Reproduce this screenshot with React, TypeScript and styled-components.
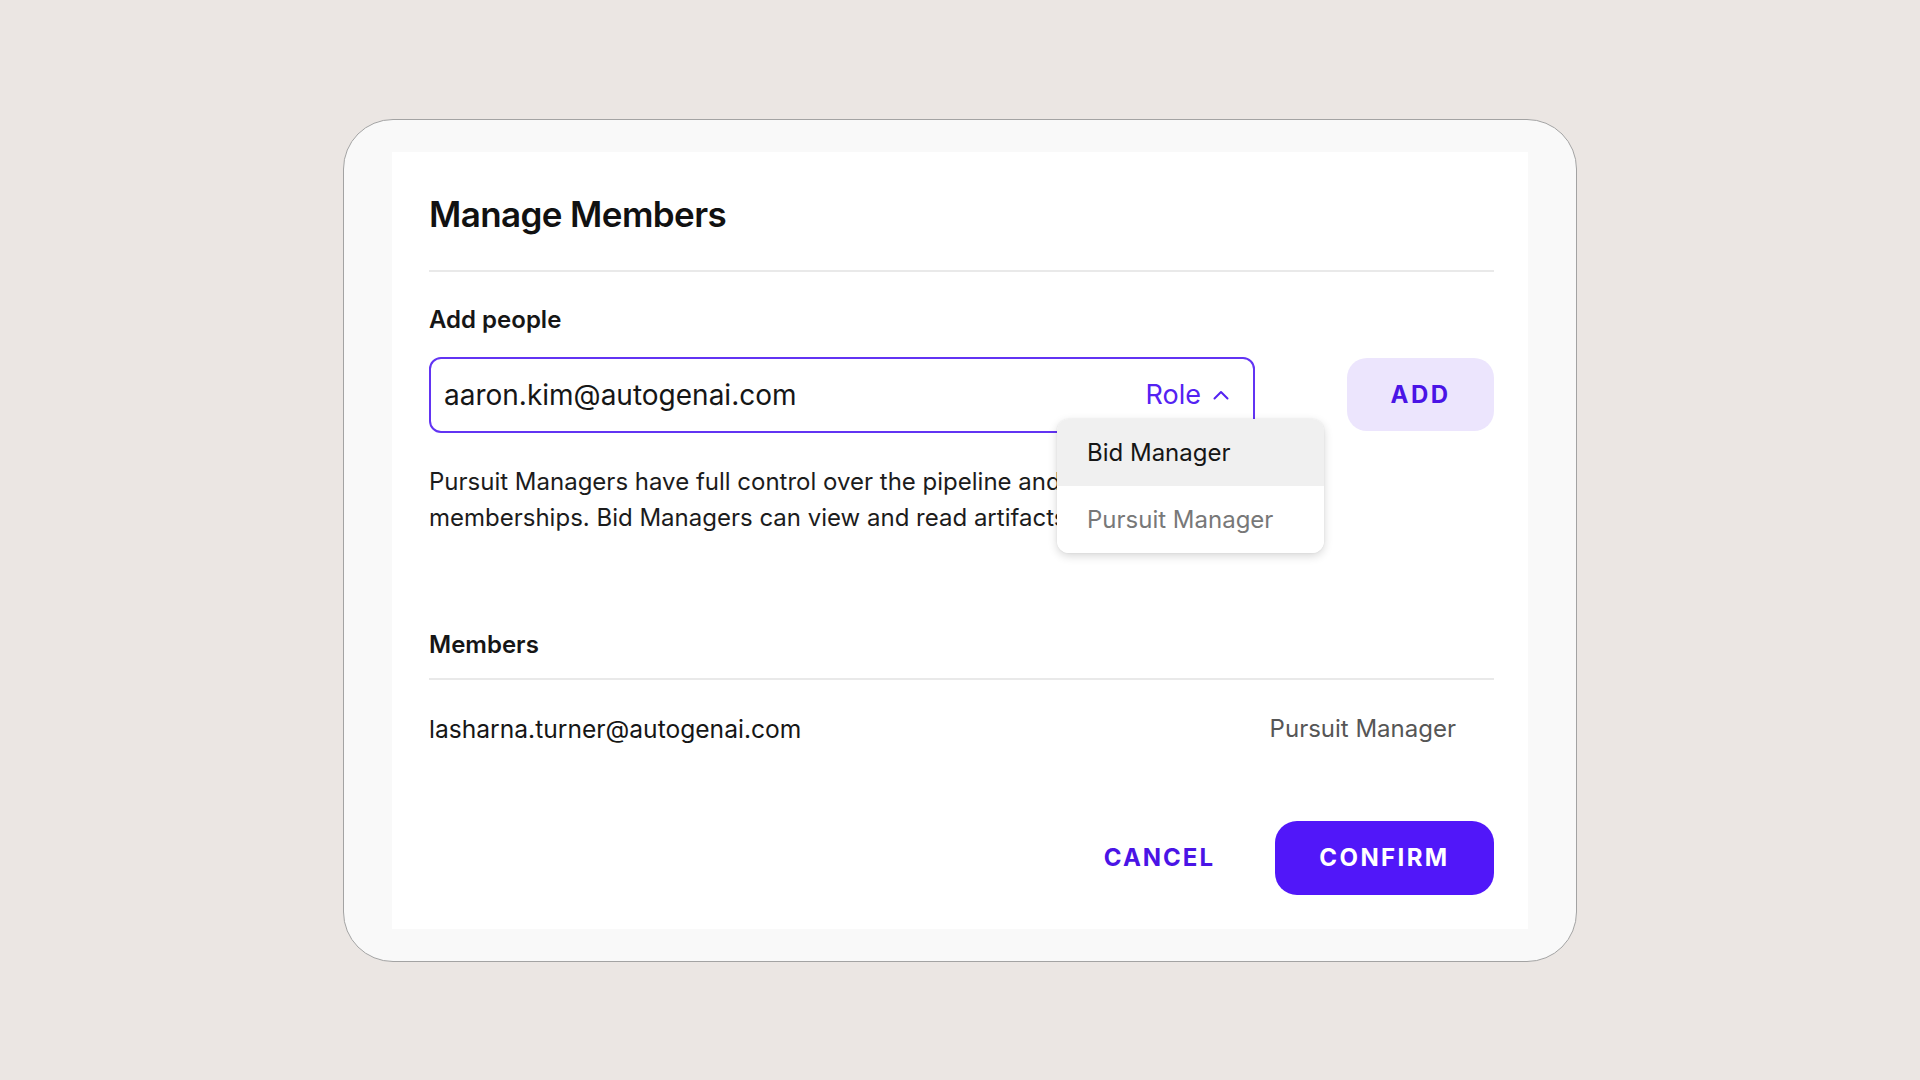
import React from 'react'
import styled, { createGlobalStyle } from 'styled-components'

const GlobalStyle = createGlobalStyle`
  html, body {
    margin: 0;
    padding: 0;
    background: #ebe6e3;
    font-family: Inter, "Liberation Sans", sans-serif;
    color: #161616;
  }
  * { box-sizing: border-box; }
`

const Page = styled.div`
  min-height: 100vh;
  display: flex;
  align-items: center;
  justify-content: center;
`

const Frame = styled.div`
  width: 1234px;
  background: #f9f9f9;
  border: 1px solid #a3a3a3;
  border-radius: 50px;
  padding: 32px 48px;
`

const Dialog = styled.section`
  background: #ffffff;
  padding: 40px 34px 34px 37px;
  display: flex;
  flex-direction: column;
`

const Title = styled.h1`
  margin: 0;
  font-size: 35px;
  line-height: 44px;
  font-weight: 600;
  letter-spacing: -0.6px;
  color: #111111;
`

const Divider = styled.hr<{ $top: number }>`
  margin: ${(p) => p.$top}px 0 0;
  border: none;
  height: 2px;
  background: #e9e9e9;
`

const SectionLabel = styled.h2<{ $top: number }>`
  margin: ${(p) => p.$top}px 0 0;
  font-size: 24px;
  line-height: 32px;
  font-weight: 600;
  color: #161616;
`

const AddRow = styled.div`
  margin-top: 21px;
  display: flex;
  justify-content: space-between;
  align-items: center;
`

const InputWrap = styled.div`
  position: relative;
  width: 826px;
`

const EmailField = styled.div`
  height: 76px;
  border: 2px solid #6234f3;
  border-radius: 12px;
  display: flex;
  align-items: center;
  justify-content: space-between;
  padding: 0 24px 0 13px;
`

const EmailText = styled.span`
  font-size: 28px;
  color: #161616;
`

const RoleToggle = styled.button`
  display: flex;
  align-items: center;
  gap: 12px;
  background: none;
  border: none;
  padding: 0;
  font-family: inherit;
  font-size: 27px;
  color: #5422f2;
  cursor: pointer;
`

const Menu = styled.ul`
  position: absolute;
  left: 628px;
  top: 62px;
  width: 267px;
  margin: 0;
  padding: 0;
  list-style: none;
  background: #ffffff;
  border-radius: 12px;
  overflow: hidden;
  box-shadow: 0 3px 10px rgba(0, 0, 0, 0.16), 0 0 2px rgba(0, 0, 0, 0.08);
  z-index: 2;
`

const MenuItem = styled.li<{ $active?: boolean }>`
  height: 67px;
  display: flex;
  align-items: center;
  padding-left: 30px;
  font-size: 24px;
  background: ${(p) => (p.$active ? '#f0f0f0' : '#ffffff')};
  color: ${(p) => (p.$active ? '#161616' : '#787878')};
`

const PillButton = styled.button<{ $variant: 'soft' | 'solid' | 'text' }>`
  height: ${(p) => (p.$variant === 'soft' ? '73px' : '74px')};
  padding: 0 ${(p) => (p.$variant === 'text' ? '24px' : '0')};
  width: ${(p) => (p.$variant === 'soft' ? '147px' : p.$variant === 'solid' ? '219px' : 'auto')};
  border: none;
  border-radius: ${(p) => (p.$variant === 'soft' ? '20px' : '22px')};
  font-family: inherit;
  font-size: 24px;
  font-weight: 700;
  letter-spacing: ${(p) => (p.$variant === 'text' ? '2px' : '2.4px')};
  cursor: pointer;
  background: ${(p) =>
    p.$variant === 'soft' ? '#ece5fd' : p.$variant === 'solid' ? '#5117f9' : 'transparent'};
  color: ${(p) => (p.$variant === 'solid' ? '#ffffff' : '#4a14e6')};
`

const Description = styled.p`
  margin: 31px 0 0;
  font-size: 24px;
  line-height: 36px;
  color: #1c1c1c;
`

const MemberRow = styled.div`
  margin-top: 31px;
  display: flex;
  justify-content: space-between;
  align-items: center;
  padding-right: 38px;
  font-size: 24px;
  line-height: 36px;
`

const MemberEmail = styled.span`
  font-size: 24.6px;
  color: #161616;
`

const MemberRole = styled.span`
  color: #565656;
`

const Footer = styled.div`
  margin-top: 74px;
  display: flex;
  justify-content: flex-end;
  align-items: center;
  gap: 36px;
`

function Chevron() {
  return (
    <svg width="16" height="10" viewBox="0 0 16 10" fill="none">
      <path d="M1.5 8.5L8 2l6.5 6.5" stroke="#5422f2" strokeWidth="2" strokeLinecap="round" strokeLinejoin="round" />
    </svg>
  )
}

const roles = ['Bid Manager', 'Pursuit Manager']

export default function App() {
  return (
    <>
      <GlobalStyle />
      <Page>
        <Frame>
          <Dialog>
            <Title>Manage Members</Title>
            <Divider $top={34} />
            <SectionLabel $top={32}>Add people</SectionLabel>
            <AddRow>
              <InputWrap>
                <EmailField>
                  <EmailText>aaron.kim@autogenai.com</EmailText>
                  <RoleToggle>
                    Role
                    <Chevron />
                  </RoleToggle>
                </EmailField>
                <Menu>
                  {roles.map((r, i) => (
                    <MenuItem key={r} $active={i === 0}>
                      {r}
                    </MenuItem>
                  ))}
                </Menu>
              </InputWrap>
              <PillButton $variant="soft">ADD</PillButton>
            </AddRow>
            <Description>
              Pursuit Managers have full control over the pipeline and can manage pipeline
              <br />
              memberships. Bid Managers can view and read artifacts within the pipeline.
            </Description>
            <SectionLabel $top={93}>Members</SectionLabel>
            <Divider $top={17} />
            <MemberRow>
              <MemberEmail>lasharna.turner@autogenai.com</MemberEmail>
              <MemberRole>Pursuit Manager</MemberRole>
            </MemberRow>
            <Footer>
              <PillButton $variant="text">CANCEL</PillButton>
              <PillButton $variant="solid">CONFIRM</PillButton>
            </Footer>
          </Dialog>
        </Frame>
      </Page>
    </>
  )
}
